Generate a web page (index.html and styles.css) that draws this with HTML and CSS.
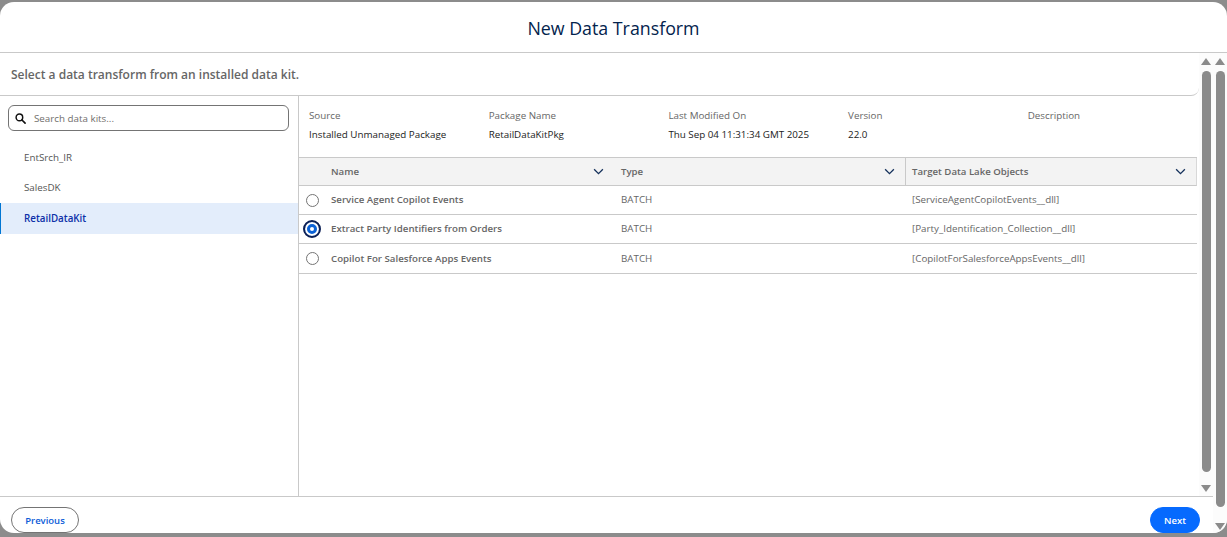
FILE: index.html
```html
<!DOCTYPE html>
<html lang="en">
<head>
    <meta charset="UTF-8">
    <meta name="viewport" content="width=device-width, initial-scale=1.0">
    <title>New Data Transform</title>
    <link rel="stylesheet" href="styles.css">
</head>
<body>
    <div class="modal">
        <header class="modal-head">New Data Transform</header>
        <div class="modal-main">
            <div class="modal-content">
                <div class="modal-body">
                    <div class="panel">
                        <p class="intro">Select a data transform from an installed data kit.</p>
                        <div class="split">
                            <aside class="kits">
                                <div class="search">
                                    <svg class="search-icon" viewBox="0 0 12 12" width="11" height="11">
                                        <circle cx="4.8" cy="4.8" r="3.6" fill="none" stroke="#111" stroke-width="1.6"/>
                                        <path d="M7.6 7.6 11 11" stroke="#111" stroke-width="1.8" stroke-linecap="round"/>
                                    </svg>
                                    <span>Search data kits...</span>
                                </div>
                                <ul class="kit-list">
                                    <li>EntSrch_IR</li>
                                    <li>SalesDK</li>
                                    <li class="active">RetailDataKit</li>
                                </ul>
                            </aside>
                            <section class="detail">
                                <div class="meta">
                                    <div><span>Source</span><b>Installed Unmanaged Package</b></div>
                                    <div><span>Package Name</span><b>RetailDataKitPkg</b></div>
                                    <div><span>Last Modified On</span><b>Thu Sep 04 11:31:34 GMT 2025</b></div>
                                    <div><span>Version</span><b>22.0</b></div>
                                    <div><span>Description</span></div>
                                </div>
                                <div class="table">
                                    <div class="row head">
                                        <div class="pick"></div>
                                        <div class="col-name">Name<svg class="chev" viewBox="0 0 12 8" width="11" height="7"><path d="M1 1.5 6 6.5 11 1.5" fill="none" stroke="#16325c" stroke-width="1.5"/></svg></div>
                                        <div class="col-type">Type<svg class="chev" viewBox="0 0 12 8" width="11" height="7"><path d="M1 1.5 6 6.5 11 1.5" fill="none" stroke="#16325c" stroke-width="1.5"/></svg></div>
                                        <div class="col-target">Target Data Lake Objects<svg class="chev" viewBox="0 0 12 8" width="11" height="7"><path d="M1 1.5 6 6.5 11 1.5" fill="none" stroke="#16325c" stroke-width="1.5"/></svg></div>
                                    </div>
                                    <div class="row">
                                        <div class="pick"><i class="radio"></i></div>
                                        <div class="col-name">Service Agent Copilot Events</div>
                                        <div class="col-type">BATCH</div>
                                        <div class="col-target">[ServiceAgentCopilotEvents__dll]</div>
                                    </div>
                                    <div class="row">
                                        <div class="pick"><i class="radio on"></i></div>
                                        <div class="col-name">Extract Party Identifiers from Orders</div>
                                        <div class="col-type">BATCH</div>
                                        <div class="col-target">[Party_Identification_Collection__dll]</div>
                                    </div>
                                    <div class="row tall">
                                        <div class="pick"><i class="radio"></i></div>
                                        <div class="col-name">Copilot For Salesforce Apps Events</div>
                                        <div class="col-type">BATCH</div>
                                        <div class="col-target">[CopilotForSalesforceAppsEvents__dll]</div>
                                    </div>
                                </div>
                            </section>
                        </div>
                    </div>
                    <div class="scrollbar inner">
                        <i class="up"></i>
                        <i class="thumb"></i>
                        <i class="down"></i>
                    </div>
                </div>
                <footer class="modal-foot">
                    <button class="btn">Previous</button>
                    <button class="btn primary">Next</button>
                </footer>
            </div>
            <div class="scrollbar outer">
                <i class="up"></i>
                <i class="thumb"></i>
                <i class="down"></i>
            </div>
        </div>
    </div>
</body>
</html>
```

FILE: styles.css
```css
* {
    box-sizing: border-box;
}
html, body {
    height: 100%;
}
body {
    margin: 0;
    padding: 2px 0 4px;
    background-color: #8c8c8c;
    font-family: "Open Sans", "Noto Sans", sans-serif;
    font-size: 9.8px;
    color: #444;
    overflow: hidden;
}
.modal {
    height: 531px;
    display: flex;
    flex-direction: column;
    background-color: #fff;
    border-radius: 14px;
    overflow: hidden;
}
.modal-head {
    height: 51px;
    flex: none;
    display: flex;
    align-items: center;
    justify-content: center;
    padding-top: 1px;
    border-bottom: 1px solid #c9c9c9;
    font-size: 17.8px;
    color: #03234d;
}
.modal-main {
    flex: 1;
    min-height: 0;
    display: flex;
}
.modal-content {
    flex: 1;
    min-width: 0;
    display: flex;
    flex-direction: column;
}
.modal-body {
    height: 444px;
    flex: none;
    display: flex;
    border-bottom: 1px solid #c9c9c9;
}
.panel {
    flex: 1;
    min-width: 0;
    display: flex;
    flex-direction: column;
}
.intro {
    height: 43px;
    flex: none;
    margin: 0;
    padding: 0 0 0 11px;
    display: flex;
    align-items: center;
    border-bottom: 1px solid #c9c9c9;
    border-bottom-right-radius: 8px;
    font-size: 12px;
    font-weight: 600;
    color: #666;
}
.split {
    flex: 1;
    min-height: 0;
    display: flex;
}

/* left list */
.kits {
    width: 299px;
    flex: none;
    border-right: 1px solid #c9c9c9;
    padding-top: 9px;
}
.search {
    height: 26px;
    margin: 0 9px 0 8px;
    padding-left: 6px;
    display: flex;
    align-items: center;
    border: 1px solid #747474;
    border-radius: 6px;
    color: #706e6b;
}
.search-icon {
    margin-right: 8px;
}
.kit-list {
    list-style: none;
    margin: 12px 0 0;
    padding: 0;
}
.kit-list li {
    height: 30px;
    padding-left: 24px;
    line-height: 30px;
    color: #555;
}
.kit-list li.active {
    height: 31px;
    line-height: 31px;
    padding-left: 23px;
    border-left: 1px solid #0176d3;
    background-color: #e3edfb;
    color: #0b2fa8;
    font-weight: 600;
}

/* right side */
.detail {
    flex: 1;
    min-width: 0;
}
.meta {
    height: 61px;
    padding: 13px 0 0 10px;
    display: flex;
}
.meta div {
    width: 179.7px;
    flex: none;
    display: flex;
    flex-direction: column;
}
.meta span {
    height: 19px;
    line-height: 13px;
    color: #666;
}
.meta b {
    font-weight: 400;
    line-height: 13px;
    color: #222;
}
.table {
    margin-right: 2px;
    border-top: 1px solid #c9c9c9;
}
.row {
    height: 29px;
    display: flex;
    align-items: center;
    border-bottom: 1px solid #c9c9c9;
    color: #666;
}
.row.head {
    height: 28px;
    background-color: #f3f3f3;
    font-size: 9.65px;
    font-weight: 600;
    border-right: 1px solid #d8d8d8;
}
.row.tall {
    height: 30px;
}
.row > div {
    height: 100%;
    display: flex;
    align-items: center;
    padding-bottom: 1px;
}
.row .pick {
    width: 27px;
    flex: none;
    padding: 0 0 0 7px;
}
.row .col-name {
    width: 295px;
    flex: none;
    padding-left: 5px;
    padding-right: 17px;
    font-size: 9.7px;
    font-weight: 600;
}
.row:not(.head) .col-name {
    color: #666;
}
.row .col-type {
    width: 290px;
    flex: none;
    margin-left: -6px;
    padding-left: 6px;
    padding-right: 10px;
}
.row .col-target {
    flex: 1;
    padding-left: 6px;
    padding-right: 10px;
}
.row.head .col-target {
    border-left: 1px solid #c9c9c9;
}
.row:not(.head) .col-target {
    padding-left: 7px;
}
.chev {
    margin-left: auto;
}
.radio {
    width: 13px;
    height: 13px;
    border: 1px solid #747474;
    border-radius: 50%;
    background-color: #fff;
}
.radio.on {
    width: 18px;
    height: 18px;
    margin-left: -3px;
    border: 2px solid #0b1f55;
    box-shadow: inset 0 0 0 2px #fff, inset 0 0 0 5px #0b62d6;
    background-color: #fff;
}

/* scrollbars */
.scrollbar {
    width: 14px;
    flex: none;
    display: flex;
    flex-direction: column;
    align-items: center;
    background-color: #fcfcfc;
}
.scrollbar .up,
.scrollbar .down {
    width: 0;
    height: 0;
    border-left: 5px solid transparent;
    border-right: 5px solid transparent;
    flex: none;
}
.scrollbar .up {
    margin-top: 5px;
    border-bottom: 7px solid #8b8b8b;
}
.scrollbar .down {
    margin-bottom: 4px;
    border-top: 7px solid #8b8b8b;
}
.scrollbar .thumb {
    width: 9px;
    flex: none;
    margin-top: 6px;
    border-radius: 5px;
    background-color: #8b8b8b;
}
.scrollbar.inner .thumb {
    height: 401px;
    margin-bottom: 13px;
}
.scrollbar.outer .thumb {
    height: 436px;
    margin-bottom: 16px;
}

/* footer */
.modal-foot {
    flex: 1;
    display: flex;
    justify-content: space-between;
    align-items: flex-start;
    padding: 10px 13px 0 11px;
}
.btn {
    height: 26px;
    width: 68px;
    padding: 0;
    border: 1px solid #747474;
    border-radius: 13px;
    background-color: #fff;
    font-family: inherit;
    font-size: 9.5px;
    font-weight: 600;
    color: #0b5cd8;
}
.btn.primary {
    width: 50px;
    border-color: #066afe;
    background-color: #066afe;
    color: #fff;
}
```
